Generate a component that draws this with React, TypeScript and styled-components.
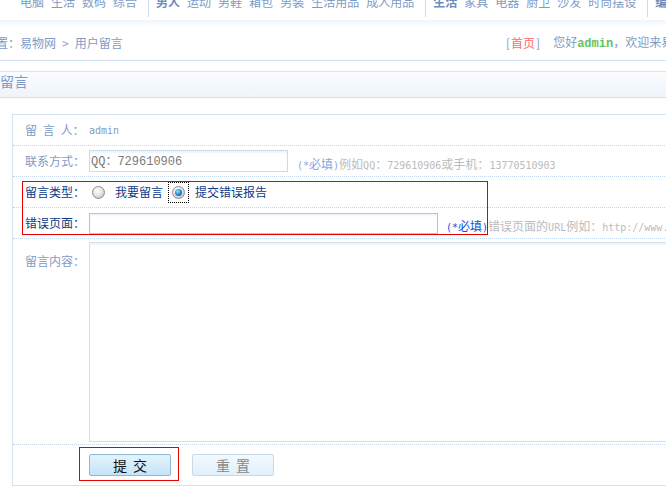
import React from "react";
import styled, { createGlobalStyle } from "styled-components";

const Global = createGlobalStyle`
  html, body { margin: 0; padding: 0; background: #fff; }
  body { font-family: "Noto Sans CJK SC", "Noto Sans", sans-serif; font-size: 12px; }
`;

const Page = styled.div`
  width: 666px;
  height: 493px;
  overflow: hidden;
  background: #fff;
`;

const Nav = styled.div`
  display: flex;
  align-items: flex-start;
  height: 20px;
  padding-left: 20px;
  white-space: nowrap;
`;

const NavGroup = styled.div`
  display: flex;
  gap: 7px;
  margin-top: -4px;
  flex: none;
`;

const NavItem = styled.a<{ $bold?: boolean }>`
  font-size: 12px;
  line-height: 12px;
  color: ${(p) => (p.$bold ? "#6d8cbd" : "#7d9bc8")};
  font-weight: ${(p) => (p.$bold ? 700 : 400)};
  text-decoration: none;
`;

const NavDivider = styled.span`
  flex: none;
  width: 1px;
  height: 17px;
  background: #c9dbee;
  margin: 0 7px 0 11px;
`;

const Band = styled.div`
  height: 5px;
  background: linear-gradient(#eef5fb, #fbfdff);
`;

const Crumb = styled.div`
  display: flex;
  align-items: center;
  height: 35px;
  border-bottom: 1px solid #d3e3f2;
  white-space: nowrap;
  color: #7d9bc8;
  font-size: 12px;
  line-height: 12px;
`;

const CrumbPath = styled.div`
  flex: none;
  width: 510px;
  margin-left: -4px;
  display: flex;
  align-items: center;
`;

const Sep = styled.span`
  margin: 0 6px;
  color: #8aa4cc;
`;

const UserBar = styled.div`
  flex: none;
  display: flex;
  align-items: center;
`;

const HomeLink = styled.a`
  color: #ff6a6a;
  text-decoration: none;
  margin: 0 1px;
`;

const Greeting = styled.span`
  margin-left: 13px;
`;

const UserName = styled.b`
  font-family: "Liberation Mono", monospace;
  font-size: 12px;
  color: #63c463;
`;

const TitleBar = styled.div`
  margin-top: 10px;
  height: 23px;
  padding-top: 2px;
  box-sizing: content-box;
  border-top: 1px solid #d6e5f3;
  border-bottom: 1px solid #cfe0f0;
  background: linear-gradient(#fafcfe, #f0f5fc);
  color: #7d9bc8;
  font-size: 14px;
  line-height: 14px;
`;

const Form = styled.div`
  position: relative;
  margin: 16px 0 0 12px;
  width: 760px;
  border: 1px solid #d3e3f3;
`;

const Row = styled.div<{ $h: number; $top?: boolean }>`
  display: flex;
  align-items: ${(p) => (p.$top ? "flex-start" : "center")};
  height: ${(p) => p.$h}px;
  padding-left: 12px;
  border-bottom: 1px dotted #c2d8ee;
  white-space: nowrap;
`;

const Label = styled.span<{ $strong?: boolean; $mt?: number }>`
  flex: none;
  width: 64px;
  margin-top: ${(p) => p.$mt ?? 0}px;
  color: ${(p) => (p.$strong ? "#0e3a88" : "#7f9cc5")};
  font-size: 12px;
  line-height: 12px;
  word-spacing: 3px;
`;

const Latin = styled.span<{ $color?: string }>`
  font-family: "DejaVu Sans Mono", monospace;
  font-size: 10px;
  ${(p) => (p.$color ? `color: ${p.$color};` : "")}
`;

const TextInput = styled.input<{ $w: number; $h: number; $strong?: boolean }>`
  flex: none;
  box-sizing: border-box;
  width: ${(p) => p.$w}px;
  height: ${(p) => p.$h}px;
  margin: 0;
  padding: 0 0 3px 1px;
  border: 1px solid ${(p) => (p.$strong ? "#a6c7e8" : "#c8dcef")};
  box-shadow: inset 0 2px 2px #eef4fb;
  background: #fff;
  font-family: "Liberation Mono", "Noto Sans CJK SC", monospace;
  font-size: 12px;
  color: #7a7a7a;
  outline: none;
`;

const Hint = styled.span<{ $tone: "light" | "strong" | "gray"; $ml?: number }>`
  flex: none;
  margin-top: 7px;
  margin-left: ${(p) => p.$ml ?? 0}px;
  font-size: 12px;
  line-height: 12px;
  color: ${(p) =>
    p.$tone === "light" ? "#86a6e6" : p.$tone === "strong" ? "#0b50dc" : "#bcbcbc"};
`;

const Option = styled.label<{ $ml: number }>`
  margin-left: ${(p) => p.$ml}px;
  color: #0e3a88;
  font-size: 12px;
  line-height: 12px;
`;

const RadioDot = styled.span<{ $checked?: boolean; $ml?: number }>`
  flex: none;
  box-sizing: border-box;
  width: 13px;
  height: 13px;
  margin-left: ${(p) => p.$ml ?? 0}px;
  border-radius: 50%;
  border: 1px solid #8e8e8e;
  background: radial-gradient(circle at 40% 35%, #ffffff 0%, #e6e6e6 45%, #b3b3b3 100%);
  display: flex;
  align-items: center;
  justify-content: center;
  &::after {
    content: "";
    display: ${(p) => (p.$checked ? "block" : "none")};
    width: 7px;
    height: 7px;
    border-radius: 50%;
    background: radial-gradient(circle at 40% 35%, #a8e4ff 0%, #2b92d8 45%, #0a4a88 100%);
  }
`;

const FocusRing = styled.span`
  flex: none;
  box-sizing: border-box;
  width: 21px;
  height: 21px;
  margin-left: 5px;
  border: 1px dotted #000;
  display: flex;
  align-items: center;
  justify-content: center;
`;

const TextArea = styled.textarea`
  flex: none;
  box-sizing: border-box;
  width: 640px;
  height: 200px;
  margin: 3px 0 0;
  border: 1px solid #d1e1ef;
  box-shadow: inset 0 2px 2px #f1f6fb;
  resize: none;
  outline: none;
`;

const Button = styled.button<{ $primary?: boolean }>`
  flex: none;
  width: 82px;
  height: 22px;
  padding: 0;
  border-radius: 2px;
  border: 1px solid ${(p) => (p.$primary ? "#8fb8d3" : "#c6dbe9")};
  background: ${(p) =>
    p.$primary
      ? "linear-gradient(#e4f3fc, #c6e4f7)"
      : "linear-gradient(#f3f9fe, #e0f0fb)"};
  color: ${(p) => (p.$primary ? "#111" : "#8a8a8a")};
  font-family: "Noto Sans CJK SC", sans-serif;
  font-size: 14px;
  line-height: 14px;
  word-spacing: 3px;
`;

const ButtonRow = styled.div`
  display: flex;
  align-items: center;
  gap: 21px;
  height: 40px;
  padding-left: 76px;
`;

const Annotation = styled.div<{ $l: number; $t: number; $w: number; $h: number }>`
  position: absolute;
  left: ${(p) => p.$l}px;
  top: ${(p) => p.$t}px;
  width: ${(p) => p.$w}px;
  height: ${(p) => p.$h}px;
  box-sizing: border-box;
  border: 1px solid #e60000;
  pointer-events: none;
`;

const navGroups: { label: string; bold?: boolean }[][] = [
  [{ label: "电脑" }, { label: "生活" }, { label: "数码" }, { label: "综合" }],
  [
    { label: "男人", bold: true },
    { label: "运动" },
    { label: "男鞋" },
    { label: "箱包" },
    { label: "男装" },
    { label: "生活用品" },
    { label: "成人用品" },
  ],
  [
    { label: "生活", bold: true },
    { label: "家具" },
    { label: "电器" },
    { label: "厨卫" },
    { label: "沙发" },
    { label: "时尚摆设" },
  ],
  [{ label: "编辑推荐", bold: true }],
];

export default function App() {
  return (
    <Page>
      <Global />
      <Nav>
        {navGroups.map((g, i) => (
          <React.Fragment key={i}>
            {i > 0 && <NavDivider />}
            <NavGroup>
              {g.map((it) => (
                <NavItem key={it.label} $bold={it.bold}>
                  {it.label}
                </NavItem>
              ))}
            </NavGroup>
          </React.Fragment>
        ))}
      </Nav>
      <Band />
      <Crumb>
        <CrumbPath>
          置：易物网<Sep>&gt;</Sep>用户留言
        </CrumbPath>
        <UserBar>
          [<HomeLink>首页</HomeLink>]
          <Greeting>
            您好<UserName>admin</UserName>，欢迎来易物网！
          </Greeting>
        </UserBar>
      </Crumb>
      <TitleBar>留言</TitleBar>
      <Form>
        <Row $h={30}>
          <Label>留 言 人：</Label>
          <Latin $color="#7f9cc5">admin</Latin>
        </Row>
        <Row $h={30}>
          <Label>联系方式：</Label>
          <TextInput $w={199} $h={22} defaultValue="QQ：729610906" readOnly />
          <Hint $tone="light" $ml={9}>
            <Latin>(*</Latin>必填<Latin>)</Latin>
          </Hint>
          <Hint $tone="gray">
            例如<Latin>QQ</Latin>：<Latin>729610906</Latin>或手机：<Latin>13770510903</Latin>
          </Hint>
        </Row>
        <Row $h={30}>
          <Label $strong>留言类型：</Label>
          <RadioDot $ml={3} />
          <Option $ml={10}>我要留言</Option>
          <FocusRing>
            <RadioDot $checked />
          </FocusRing>
          <Option $ml={6}>提交错误报告</Option>
        </Row>
        <Row $h={30}>
          <Label $strong>错误页面：</Label>
          <TextInput $w={349} $h={21} $strong readOnly />
          <Hint $tone="strong" $ml={8}>
            <Latin>(*</Latin>必填<Latin>)</Latin>
          </Hint>
          <Hint $tone="gray">
            错误页面的<Latin>URL</Latin>例如：<Latin>http://www.ewuwang.com/</Latin>
          </Hint>
        </Row>
        <Row $h={205} $top>
          <Label $mt={16}>留言内容：</Label>
          <TextArea />
        </Row>
        <ButtonRow>
          <Button $primary>提 交</Button>
          <Button>重 置</Button>
        </ButtonRow>
        <Annotation $l={9} $t={66} $w={466} $h={54} />
        <Annotation $l={66} $t={332} $w={100} $h={34} />
      </Form>
    </Page>
  );
}
